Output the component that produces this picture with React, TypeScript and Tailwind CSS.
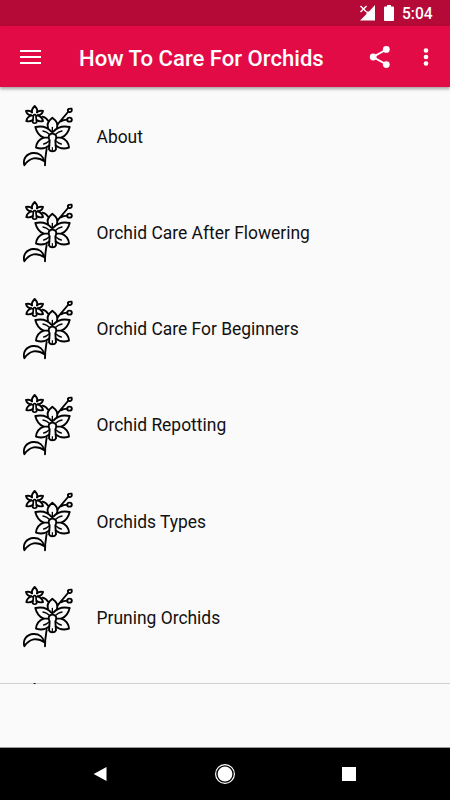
import React from 'react';

const items = [
  'About',
  'Orchid Care After Flowering',
  'Orchid Care For Beginners',
  'Orchid Repotting',
  'Orchids Types',
  'Pruning Orchids',
];

const OrchidIcon: React.FC = () => (
  <svg
    viewBox="0 0 210 228"
    className="h-[76px] w-[70px] shrink-0"
    fill="none"
    stroke="#000"
    strokeWidth="5.6"
    strokeLinecap="round"
    strokeLinejoin="round"
  >
    {/* small flower */}
    <path d="M51 43C49 36 53 30 59 24C65 30 69 36 66 43" />
    <path d="M51 43C45 37 38 38 33 39C35 47 40 51 48 52" />
    <path d="M66 43C72 37 79 38 84 39C82 47 77 51 69 52" />
    <path d="M48 52C39 56 35 61 34 69C42 71 48 70 53 66" />
    <path d="M69 52C78 56 83 61 84 69C76 71 70 70 65 66" />
    <path d="M48 52L54 54M69 52L64 54M55 56C52 48 66 48 63 56L65 73C62 76 56 76 53 73Z" strokeWidth="5" />
    {/* stems and buds */}
    <path d="M82 56Q93 58 100 69M127 80L159 42M137 70Q146 65 157 65" />
    <path d="M160 41C156 33 162 31 170 32C172 40 167 45 160 41Z" />
    <ellipse cx="163.5" cy="65" rx="7" ry="6" />
    {/* large flower */}
    <path d="M99 89C94 77 101 68 112 59C124 68 131 77 126 89" />
    <path d="M109 101C97 86 80 83 61 87C65 104 73 114 86 119H101" />
    <path d="M115 101C128 86 145 83 164 87C160 104 152 114 139 119H124" />
    <path d="M86 119C70 125 64 135 63 149C80 154 94 150 103 142" />
    <path d="M139 119C155 125 161 135 162 149C145 154 131 150 122 142" />
    <path d="M104 127C97 118 102 107 112 107C123 107 128 118 121 127L123 154C119 162 106 162 102 154Z" />
    <path
      d="M112 88V104M84 99Q95 101 103 109M141 99Q130 101 122 109M86 138Q95 136 102 129M139 138Q130 136 123 129"
      strokeWidth="4"
    />
    <path d="M112 149V158" strokeWidth="3.5" />
    {/* main stem and leaf */}
    <path d="M95 153C93 166 90 177 90 202" />
    <path d="M28 202C22 181 37 166 55 165C73 164 85 175 88 190C67 174 43 179 28 202Z" />
  </svg>
);

const StatusBar: React.FC = () => (
  <div className="flex h-[26px] shrink-0 items-center bg-[#b50938] pl-[359px] text-white">
    <svg viewBox="0 0 17 18" className="h-[18px] w-[17px]">
      <path d="M16 1V16.5H1L7.5 10V7.5H10Z" fill="#fff" />
      <path d="M1.5 2L7.5 8M7.5 2L1.5 8" stroke="#fff" strokeWidth="1.4" />
    </svg>
    <svg viewBox="0 0 10 18" className="ml-2 h-[18px] w-[10px]">
      <path d="M3 1H7V2.5H9Q10 2.5 10 3.5V16Q10 17 9 17H1Q0 17 0 16V3.5Q0 2.5 1 2.5H3Z" fill="#fff" />
    </svg>
    <span className="mt-[2px] ml-[8px] text-[15.6px] leading-5 font-medium">5:04</span>
  </div>
);

const AppBar: React.FC = () => (
  <header className="flex h-[61px] shrink-0 items-center bg-[#e30b46] pl-5 text-white shadow-[0_2px_3px_rgba(0,0,0,0.35)]">
    <svg viewBox="0 0 21 16" className="h-4 w-[21px]">
      <path d="M0 2H21M0 8H21M0 14H21" stroke="#fff" strokeWidth="2.2" />
    </svg>
    <h1 className="mt-[2px] ml-[38px] w-[290px] text-[22.1px] leading-7 font-medium whitespace-nowrap">
      How To Care For Orchids
    </h1>
    <svg viewBox="0 0 22 24" className="h-6 w-[22px]">
      <path d="M17.5 4.5L4 12L17.5 19.5" fill="none" stroke="#fff" strokeWidth="2" />
      <circle cx="17.3" cy="4.4" r="3.4" fill="#fff" />
      <circle cx="4.2" cy="12" r="3.4" fill="#fff" />
      <circle cx="17.3" cy="19.6" r="3.4" fill="#fff" />
    </svg>
    <svg viewBox="0 0 6 20" className="ml-[32px] h-5 w-[6px]" fill="#fff">
      <circle cx="3" cy="3.5" r="2.3" />
      <circle cx="3" cy="10" r="2.3" />
      <circle cx="3" cy="16.5" r="2.3" />
    </svg>
  </header>
);

const NavigationBar: React.FC = () => (
  <nav className="flex h-[53px] shrink-0 items-center border-t border-[#999] bg-black pl-[93px]">
    <svg viewBox="0 0 14 16" className="h-4 w-[14px]">
      <path d="M13.5 1V15L0.7 8Z" fill="#fff" />
    </svg>
    <svg viewBox="0 0 22 22" className="ml-[107px] h-[22px] w-[22px]">
      <circle cx="11" cy="11" r="9.4" fill="none" stroke="#fff" strokeWidth="1.2" />
      <circle cx="11" cy="11" r="7.4" fill="#fff" />
    </svg>
    <div className="ml-[106px] h-[14px] w-[14px] bg-white" />
  </nav>
);

export default function App() {
  return (
    <div className="flex h-[800px] w-[450px] flex-col overflow-hidden bg-[#fafafa] font-['Roboto',sans-serif]">
      <StatusBar />
      <AppBar />
      <div className="h-[597px] shrink-0 overflow-hidden bg-[linear-gradient(#d0d0d0,#d0d0d0)] bg-[length:100%_1px] bg-bottom bg-no-repeat">
        <ul className="pt-px">
          {items.map((item) => (
            <li key={item} className="flex h-[96.25px] items-center pl-[15px] text-[17.45px] text-[#111]">
              <OrchidIcon />
              <span className="mt-[1px] ml-[11.5px]">{item}</span>
            </li>
          ))}
          {/* next row, just starting to scroll into view */}
          <li className="flex h-[96.25px] items-center pl-[15px]">
            <OrchidIcon />
          </li>
        </ul>
      </div>
      <div className="h-[63px] shrink-0" />
      <NavigationBar />
    </div>
  );
}
